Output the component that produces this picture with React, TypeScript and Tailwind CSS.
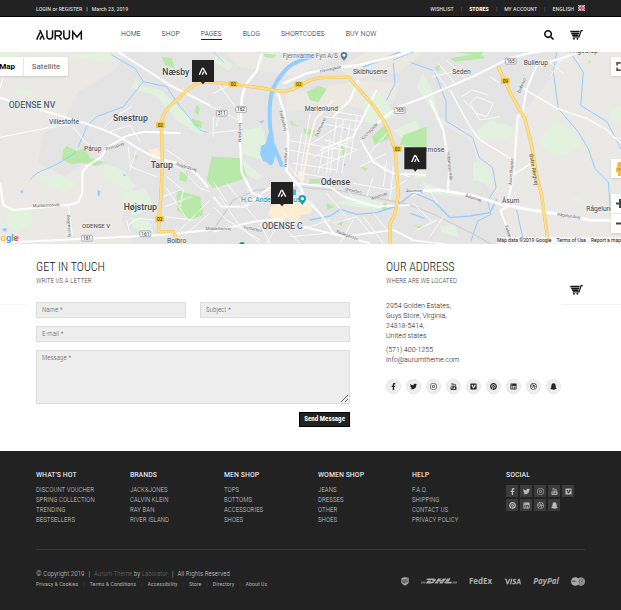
import type { ComponentType, ReactNode } from "react";
import {
  FaFacebookF,
  FaTwitter,
  FaInstagram,
  FaVimeoSquare,
  FaPinterest,
  FaLinkedin,
  FaDribbble,
  FaSnapchatGhost,
  FaSearch,
  FaDhl,
} from "react-icons/fa";
import { SiVisa } from "react-icons/si";

type IconProps = { className?: string };

const YoutubeStack = ({ className }: IconProps) => (
  <svg viewBox="0 0 16 16" className={className} fill="none" stroke="currentColor" strokeWidth="1.3">
    <path d="M3.6 0l1.4 3.4L6.4 0M5 3.2V6.4M8 2.4c-1 0-1 .6-1 1.4s0 2 1 2 1-1.2 1-2 0-1.4-1-1.4zM10.8 2v3.2c0 1 1.4.7 2-.2M12.8 2v4.2" />
    <path fill="currentColor" stroke="none" fillRule="evenodd" d="M3 7.2h10c1 0 1.8.8 1.8 1.8v5c0 1-.8 1.8-1.8 1.8H3c-1 0-1.800-.8-1.800-1.800V9c0-1 .8-1.800 1.800-1.800zM2.600 8.700v1h1v4.600h1.100V9.700h1v-1zM6 10.300v3c0 1.300 1.300 1.100 2 .5v.5h.8v-4H8v3c-.4.4-1 .5-1 0v-3zM9.600 8.700v5.600h.8c1.300.3 1.700-.3 1.700-1.200v-1.600c0-1-.8-1.400-1.600-.9V8.700z" />
  </svg>
);

const CartIcon = ({ className }: IconProps) => (
  <svg viewBox="0 0 40 32" className={className} fill="none" stroke="currentColor">
    <path d="M40 2h-5l-7 20H8" strokeWidth="4" />
    <path d="M0 5h30M3 11h25M6 17h20" strokeWidth="4.500" />
    <circle cx="12" cy="28" r="3" fill="currentColor" stroke="none" />
    <circle cx="23" cy="28" r="3" fill="currentColor" stroke="none" />
  </svg>
);

const AurumLogo = ({ className }: IconProps) => (
  <svg viewBox="0 0 142 30" className={className} fill="none" stroke="currentColor" strokeWidth="4.500">
    <path d="M2 29L12 7M10 2h3l12 27M12 29l5-11" />
    <path d="M33 1v17c0 12 17 12 17 0V1" />
    <path d="M58 29V3h11c10 0 10 14 0 14H58M68 17l9 12" />
    <path d="M84 1v17c0 12 17 12 17 0V1" />
    <path d="M111 29V5l13 16 13-16v24" />
  </svg>
);

const UpsShield = ({ className }: IconProps) => (
  <svg viewBox="0 0 26 28" className={className}>
    <path d="M1 4c7-5 17-5 24-2v14c0 6-6 8-12 12C7 24 1 22 1 16z" fill="currentColor" />
    <path d="M3 9c8 0 14-1 20-5M5 11v5c0 3 4 2 4 0v-5M12 22V11c5-2 5 6 0 6M22 10c-5-1-5 2-2 3s2 5-3 3" stroke="#222" strokeWidth="1.800" fill="none" />
  </svg>
);

const MasterCardIcon = ({ className }: IconProps) => (
  <svg viewBox="0 0 42 26" className={className} fill="currentColor">
    <circle cx="13" cy="13" r="13" />
    <path d="M29 0a13 13 0 1 1-8 23l2-2h-4l-1-2h7l1-2h-9v-2h10v-2H17l1-2h8l-1-2h-7l2-2h3l-2-3a13 13 0 0 1 8-4z" opacity=".8" />
    <path d="M4 15l2-5 2 4 3-4-1 5M13 15l2-3M22 15l3-5M31 15l3-5" stroke="#222" strokeWidth="1.500" fill="none" />
  </svg>
);

const socials: { name: string; Icon: ComponentType<IconProps> }[] = [
  { name: "Facebook", Icon: FaFacebookF },
  { name: "Twitter", Icon: FaTwitter },
  { name: "Instagram", Icon: FaInstagram },
  { name: "YouTube", Icon: YoutubeStack },
  { name: "Vimeo", Icon: FaVimeoSquare },
  { name: "Pinterest", Icon: FaPinterest },
  { name: "LinkedIn", Icon: FaLinkedin },
  { name: "Dribbble", Icon: FaDribbble },
  { name: "Snapchat", Icon: FaSnapchatGhost },
];

const navItems = ["HOME", "SHOP", "PAGES", "BLOG", "SHORTCODES", "BUY NOW"];

const footerColumns = [
  { title: "WHAT'S HOT", links: ["DISCOUNT VOUCHER", "SPRING COLLECTION", "TRENDING", "BESTSELLERS"] },
  { title: "BRANDS", links: ["JACK&JONES", "CALVIN KLEIN", "RAY BAN", "RIVER ISLAND"] },
  { title: "MEN SHOP", links: ["TOPS", "BOTTOMS", "ACCESSORIES", "SHOES"] },
  { title: "WOMEN SHOP", links: ["JEANS", "DRESSES", "OTHER", "SHOES"] },
  { title: "HELP", links: ["F.A.Q.", "SHIPPING", "CONTACT US", "PRIVACY POLICY"] },
];

const legalLinks = ["Privacy & Cookies", "Terms & Conditions", "Accessibility", "Store", "Directory", "About Us"];

function TopBar() {
  return (
    <div className="flex h-[17px] items-center justify-between border-b border-black bg-[#222] px-9 text-[6px] font-normal text-gray-200">
      <div className="flex gap-1">
        <span>
          <a href="#login">LOGIN</a> or <a href="#register">REGISTER</a>
        </span>
        <span>|</span>
        <span>March 23, 2019</span>
      </div>
      <nav className="flex items-center gap-[7px]">
        <a href="#wishlist">WISHLIST</a>
        <span className="text-[#666]">|</span>
        <a href="#stores" className="font-bold text-white">STORES</a>
        <span className="text-[#666]">|</span>
        <a href="#account">MY ACCOUNT</a>
        <span className="text-[#666]">|</span>
        <a href="#language" className="flex items-center gap-1">
          ENGLISH
          <svg viewBox="0 0 14 12" className="h-[6px] w-[7px]">
            <rect width="14" height="12" fill="#4a83c4" />
            <path d="M0 0l14 12M14 0L0 12" stroke="#dfe8f5" strokeWidth="2" />
            <path d="M7 0v12M0 6h14" stroke="#fff" strokeWidth="4" />
            <path d="M7 0v12M0 6h14" stroke="#e8432f" strokeWidth="3" />
          </svg>
        </a>
      </nav>
    </div>
  );
}

function Header() {
  return (
    <header className="flex h-[35px] items-center bg-white px-9 text-[#222]">
      <a href="#home" aria-label="Aurum" className="mr-[38px] text-[#111]">
        <AurumLogo className="h-[10px] w-[47px]" />
      </a>
      <nav className="flex flex-1 gap-[21px] text-[8px] leading-[10px]">
        {navItems.map((item) => (
          <a
            key={item}
            href={`#${item.toLowerCase()}`}
            className={item === "PAGES" ? "border-b border-[#222]" : "border-b border-transparent"}
          >
            {item}
          </a>
        ))}
      </nav>
      <div className="flex items-center gap-4 text-[#111]">
        <button aria-label="Search">
          <FaSearch className="h-[10px] w-[10px]" />
        </button>
        <button aria-label="Cart" className="mr-[2px]">
          <CartIcon className="h-[10px] w-[13px]" />
        </button>
      </div>
    </header>
  );
}

const Marker = ({ x, y }: { x: number; y: number }) => (
  <g transform={`translate(${x} ${y})`}>
    <path d="M0 0h66v66H39l-6 7-6-7H0z" fill="#222" />
    <path d="M22 44l9-19h3l10 19M31 44l4-9" fill="none" stroke="#fff" strokeWidth="4" />
  </g>
);

const RoadSign = ({ x, y, children, yellow }: { x: number; y: number; children: ReactNode; yellow?: boolean }) => (
  <g transform={`translate(${x} ${y})`}>
    <rect x={yellow ? -13 : -16} y="-8" width={yellow ? 26 : 32} height="17" rx="2" fill={yellow ? "#f6c81c" : "#fff"} stroke={yellow ? "none" : "#888"} strokeWidth="2" />
    <text y="6" textAnchor="middle" fontSize="14" fontWeight="500" fill="#444">{children}</text>
  </g>
);

function CityMap() {
  return (
    <svg viewBox="0 6 1863 576" preserveAspectRatio="xMidYMid slice" className="block h-48 w-full font-[Roboto,sans-serif]" role="img" aria-label="Map of Odense">
      <rect y="6" width="1863" height="576" fill="#ebe9e6" />
      {/* built-up area */}
      <path fill="#e4e4e5" d="M380 6L345 60 230 130l-40 90-60 30-15 90 80 40 55-40 110 20 40 60-35 90 40 80-50 56h1130l60-60-40-120-60-80-30-110-110-70 200-90 60-80 40-66H1100l-100 60-120 50-160-30-80-74z" />
      <path fill="#e4e4e5" d="M1300 6h380l-20 70-90 110-60 80-120-30-100-50-50-100z" />
      <path fill="#ece8e2" d="M860 130l220-40 120 10-20 60-80 20-60-15-180 20zM1100 6h170l-70 60-130 20-60-30z" />
      {/* pale greens */}
      <g fill="#e3f1df">
        <path d="M0 6h70l-30 20H0zM45 115l50 5 5 20-50-5zM405 85l15 20 60 15 80 70 55 50-15 15-65-40-70-80-70-20z" />
        <path d="M120 380l60-8 50 30-30 28-60-22zM20 480l70-10 10 50-50 25-30-20zM310 340l60 20 40 50-30 10-70-40zM365 430l70-15 30 60-60 20-40-20zM390 500l60 15 10 40-60-20z" />
        <path d="M730 240l55-10 20 70-20 30-60-20zM725 330l65 50-20 10-50-30zM1090 165l40-50 55 80-60 30-30-10zM1180 240l70-30 20 90-50-20z" />
        <path d="M1270 70l30 60 15 60-25-20-40-60zM1245 350l30-8 5 40-35 5zM1430 240l45-30 40 20-10 35-60 5zM1490 240l20-20 25 10 5 25-25 15-25-5zM1615 270l50-55 55 30 10 30 20 15-80 30-35-20zM1830 180l33-15v60l-30-20zM1420 335l40 10 20 60-60-15zM1320 530l45-8 10 40-50-15zM1715 435l30 5-5 15-25-5z" />
        <path d="M640 6l60 40-15 15-45-25zM1010 460l60-25 110 30-60 15zM200 15l120-5 30 15-40 10zM1265 395l60 20 90 20-10 10-120-15z" />
      </g>
      {/* parks */}
      <g fill="#b8e9a8">
        <path d="M190 300l10-12 30 15 25-10 15 30 45 15-30 10-40-10-30 5-30-15zM530 420l70 20 10 55-40 15-40-30zM540 365l25 5-5 25-22-5zM590 165l10 10-5 20-12-10zM575 205l30 10v20l-25-10zM402 313l12 4-5 12-10-6zM485 20l30 5 10 30-30-10z" />
        <path d="M635 320l90 5 15 60-50 15-50 15-20-25zM920 125l35-18 25 10-25 40-25-6zM870 210l25 20-20-5zM910 235l35 5-5 20-25-8zM1115 260l40-35 15 40-45 20zM1020 285l20 10-10 25zM930 388l30-2v14l-35 3zM980 460l25 10-25 10zM790 10l40 5-10 10-25-4zM1080 350l25 5-10 8zM1150 460l10-3v22l-14 5zM1015 515l16-2-5 14-11-2zM1210 255l70-25v65l-80-10z" />
        <path d="M1350 25l90-15 15 15-90 10zM1305 50l15-6-2 18-10-2zM1240 525l30 5-10 8zM1370 6h80l-10 12zM1765 30l10 5-8 6z" />
      </g>
      {/* centre and station blocks */}
      <path fill="#fdeed3" d="M895 365l18-4v28l-20-6zM812 470l45-15 20 10 20-25 40 30-5 20-30 5-10 20-30-12-20 20-25-5-5-25-10 10zM445 300l30-5 12 25-25-3z" />
      {/* water */}
      <g fill="none" stroke="#93ceff" strokeLinecap="round" strokeLinejoin="round">
        <path strokeWidth="12" d="M940 18c-30 10-70 20-90 50-35 40-45 70-40 160l8 60M812 250l-20 70 20 20M820 285l25 60" />
        <path strokeWidth="3" d="M335 15l70 40 25 40-60 75-80 30-30 30-25 60M430 95l70 15 40 60 60 70 30 10" />
        <path strokeWidth="3" d="M92 388c20-30 60-30 95-55l40-25M1180 30l60-24M1233 38l70 25 35 90v60l80 50 20 60 40 30 10 60-25 40 10 40-40 20-20 60M1670 6l-10 60 15 110 60 70 30 50 20 60 40 40 5 70" />
        <path strokeWidth="4" d="M930 510l60-12 30-20 50 15 60-5 60-20 50-40 60 25 50 50 60-5 60-10 20-40M1233 490l40 15" />
        <path strokeWidth="3" d="M1710 6l40 60-8 100 80 50 40 80M1550 480l20 90M640 6l30 30M1160 150l25-50-5-60" />
        <path strokeWidth="5" d="M1090 50l40-15 70-29" />
      </g>
      <path fill="#93ceff" d="M783 288l25-12 22 20-10 45-30-8-10-20zM60 425l10-6-2 12zM293 420l8 4-3 18-5-8zM370 372h6v6h-6zM8 535h14l-4 10-10-2zM1033 235l5-2-3 10zM1030 340l8 2-5 8zM775 215l18-5-6 10z" />
      {/* rail */}
      <path fill="none" stroke="#cfcfcf" strokeWidth="4" d="M640 540l60-90 70-30 130-8 120 10 200 40 80 30 120 60 60 34" />
      {/* residential streets */}
      <g fill="none" stroke="#fbfbfb" strokeWidth="3">
        <path d="M310 235l35-35 50-30M330 245l60-20 30 50M385 290l5 60 80 30M410 300l-20 60M440 345l30-35M500 300l60 40M490 335l50 20 60 60 30 10M500 415l60 90M490 440l50-20M495 470l80-30M490 500l90 10M540 540l90-90M560 550l70-60M500 380l50 40-10 50M385 525l30-20 50 5M390 550l-10-40" />
        <path d="M650 95l60 80 10 60M640 130l60-30M615 160l100 50M620 250l100-10M640 200v60M660 170l-10 60M850 330l60 70M860 270l110 20 60 10M870 300l150 30M880 340l130 20M900 370l130 20M905 250l-20 130M930 190l-30 190M970 290l-15 80M990 260l-10 110M1010 200l-20 170M1030 210l-20 160M1050 220l-25 150M1070 200l-20 130M960 220l110 20M970 200l120 15M975 180l120 20M920 290l110-70M940 320l120-50M960 350l110-50M975 270l100 30" />
        <path d="M1080 350l80-40M1090 290l60 70 80 20M1100 320l70-80M1060 400l110 20 50-30M1030 400l40 60 70 10M1120 380l-20 60M1160 330l-10 80M1180 350l-10 100M930 450l50 70M980 430l60 70M1000 520l70-20 50 60M1060 510l-40 70M1090 500l60 80M1120 490l50 60M900 540l90-30M870 560l110-10M820 500l80 80M850 490l60 50M780 520l30 60M800 580l50-80M640 470l40 40 100 60M660 440l60 90 60 50M680 400l90 110M640 395l40 60M740 470l60-50 100 10" />
        <path d="M1300 60l40 50M1315 40l50 60M1295 80l90-20M1340 30l60 60M1390 150l40 40 30 10 20-40-50-20-20 20 30 50 60-10M1385 140l30-20 50 15M1470 80l30 20M1233 440l50-30 30 50M1240 460l60 60M1250 540l60-30M1290 560l40-60M1640 30l50 40M1690 20l-40 60" />
      </g>
      {/* main streets */}
      <g fill="none" stroke="#fff" strokeLinejoin="round">
        <path strokeWidth="6" d="M0 143l200 60c70 20 130 40 180 70 50 35 90 55 150 65 40 10 70 40 95 75M355 6l95 60 60 40 120 60M0 578l180-8 200-10 100-5 150-15M0 400l10 65 30 15 165-15 30-8 12-30v-60l15-20 40-25 20-30 60-35 50-12 110 5" />
        <path strokeWidth="3" d="M10 80l-10 35M0 262l150-30 60-8M220 230l30 40 25 20M205 465l12 90" />
        <path strokeWidth="7" d="M785 12l-15 50-35 45-10 40-5 120 5 100 30 60 30 15M830 118l20 60 15 80-5 105 45 55 10 50M850 100l70-30 70-15 90-10 150-39" />
        <path strokeWidth="6" d="M1083 270l65-65 50-35 80-30 140-60 60-30 50-25 60-15 60-10M1000 200l50-50 25-60" />
        <path stroke="#fdf3e2" strokeWidth="6" d="M905 400l25-130 15-60 55-60" />
        <path strokeWidth="5" d="M1083 270l35 65 60 35 100 5M960 300l100-40 40-80 30-60M615 90l60 10 60 10M640 440l25 30h70l70-55 80-10M640 545l120-30 90-10M890 400l100 10 40 30 100 30 100-5M900 430l60 60 40 60 110 30M910 530l120 30 150-20 60 30" />
        <path strokeWidth="8" d="M1233 425l80-5 100 15 90 28 80 15 100 15 90 18h70l20-8" />
        <path strokeWidth="6" d="M1290 150l40 90 18 110-5 80M1740 6l-60 20-70 20-30 70-12 70-15 15-12 170-20 100-20 10 40 100" />
        <path strokeWidth="4" d="M1350 120l60 110 30 40 100 60M1570 115l100 60 90 30 60 35 43 40M1545 370l50-30M1233 570l100 12" />
      </g>
      {/* ring roads */}
      <g fill="none" strokeLinecap="round" strokeLinejoin="round">
        <path stroke="#eec366" strokeWidth="10" d="M606 95c-30 10-40 20-70 50-35 30-50 45-52 80l3 100-4 110-5 65-3 45h45l15 30M606 95l80 6 90 12 70 12c60-5 60-40 130-43h70c40 50 90 90 120 160l20 60 9 130-10 60-15 30v60M1495 52l40 85 40 70 20 80 15 90 15 60 20 145" />
        <path stroke="#ffdf85" strokeWidth="7" d="M606 95c-30 10-40 20-70 50-35 30-50 45-52 80l3 100-4 110-5 65-3 45h45l15 30M606 95l80 6 90 12 70 12c60-5 60-40 130-43h70c40 50 90 90 120 160l20 60 9 130-10 60-15 30v60M1495 52l40 85 40 70 20 80 15 90 15 60 20 145" />
      </g>
      <RoadSign x={481} y={225} yellow>02</RoadSign>
      <RoadSign x={479} y={507} yellow>02</RoadSign>
      <RoadSign x={700} y={101} yellow>02</RoadSign>
      <RoadSign x={896} y={103} yellow>02</RoadSign>
      <RoadSign x={1192} y={297} yellow>02</RoadSign>
      <RoadSign x={1516} y={92} yellow>09</RoadSign>
      <RoadSign x={261} y={564}>161</RoadSign>
      <RoadSign x={436} y={551}>161</RoadSign>
      <RoadSign x={665} y={189}>311</RoadSign>
      <RoadSign x={723} y={178}>162</RoadSign>
      <RoadSign x={1199} y={181}>165</RoadSign>
      <RoadSign x={1532} y={33}>165</RoadSign>
      {/* place names */}
      <g fill="#3f464d" stroke="#f4f4f4" strokeWidth="3" paintOrder="stroke">
        <g fontSize="26" fontWeight="500">
          <text x="487" y="75">Næsby</text>
          <text x="339" y="214">Snestrup</text>
          <text x="452" y="355">Tarup</text>
          <text x="371" y="479">Højstrup</text>
          <text x="962" y="404">Odense</text>
        </g>
        <g fill="#54606d" fontWeight="500">
          <text x="26" y="175" fontSize="26">ODENSE NV</text>
          <text x="246" y="535" fontSize="18">ODENSE V</text>
          <text x="786" y="536" fontSize="26">ODENSE C</text>
        </g>
        <g fontSize="20">
          <text x="147" y="221">Villestofte</text>
          <text x="252" y="303">Pårup</text>
          <text x="501" y="578">Bolbro</text>
          <text x="1059" y="71">Skibhusene</text>
          <text x="914" y="184">Marienlund</text>
          <text x="1357" y="71">Seden</text>
          <text x="1571" y="45">Bullerup</text>
          <text x="1719" y="9">Agedrup</text>
          <text x="1276" y="307">rmose</text>
          <text x="1506" y="458">Åsum</text>
          <text x="1759" y="483">Rågelund</text>
        </g>
        <text x="848" y="25" fontSize="19" fill="#5c7286">Fjernvarme Fyn A/S</text>
        <text x="723" y="456" fontSize="20" fill="#1b8a9e">H.C. Andersens Hus</text>
        <text x="630" y="593" fontSize="18" fill="#2e7d32">Danmarks</text>
        <g fontSize="13" fill="#666" strokeWidth="2">
          <text x="98" y="472" transform="rotate(-3 98 472)">Munkemosvej</text>
          <text x="318" y="302" transform="rotate(-18 318 302)">Paarupvej</text>
          <text x="528" y="345" transform="rotate(18 528 345)">Rugårdsvej</text>
          <text x="201" y="495" transform="rotate(86 201 495)">Bogensevej</text>
          <text x="724" y="275" transform="rotate(-90 724 275)">Næsbyvej</text>
          <text x="837" y="182" transform="rotate(75 837 182)">Toldbodvej</text>
          <text x="860" y="350" transform="rotate(-88 860 350)">Nordhavn</text>
          <text x="952" y="262" transform="rotate(-65 952 262)">Skibhusvej</text>
          <text x="960" y="68" transform="rotate(-12 960 68)">Havnegade</text>
          <text x="1089" y="270" transform="rotate(-46 1089 270)">Kochsgade</text>
          <text x="1035" y="421" transform="rotate(12 1035 421)">Østerbro</text>
          <text x="1115" y="451" transform="rotate(-20 1115 451)">Åsumvej</text>
          <text x="730" y="535" transform="rotate(12 730 535)">Vesterbro</text>
          <text x="617" y="541">Middelfartvej</text>
          <text x="1008" y="548" transform="rotate(20 1008 548)">Rødegårdsv.</text>
          <text x="1218" y="427">Åsumvej</text>
          <text x="1340" y="305" transform="rotate(84 1340 305)">Vollsmose Allé</text>
          <text x="1395" y="440" transform="rotate(18 1395 440)">Åsumvej</text>
          <text x="1535" y="405" transform="rotate(-86 1535 405)">Åsum Bygade</text>
          <text x="1560" y="130" transform="rotate(-68 1560 130)">Bullerup</text>
          <text x="1671" y="497" transform="rotate(8 1671 497)">Rågelundvej</text>
          <text x="1514" y="527" transform="rotate(72 1514 527)">Kirkevej</text>
        </g>
        <text x="1588" y="312" transform="rotate(80 1588 312)" fontSize="16" fontWeight="500" fill="#7d5a1e" strokeWidth="1">Østre Ringvej</text>
      </g>
      {/* place pins */}
      <path d="M1032 33c-5-8-10-10-10-17a10 10 0 0 1 20 0c0 7-5 9-10 17z" fill="#5b7f96" />
      <circle cx="1032" cy="16" r="4" fill="#fff" />
      <path d="M907 465c-5-8-11-12-11-19a11 11 0 0 1 22 0c0 7-6 11-11 19z" fill="#12a0b5" />
      <circle cx="907" cy="446" r="5" fill="#fff" />
      <rect x="870" y="418" width="18" height="18" rx="3" fill="#37b9e8" />
      <path d="M718 582a8 6 0 0 1 16 0z" fill="#23a03b" />
      <Marker x={576} y={30} />
      <Marker x={813} y={396} />
      <Marker x={1213} y={292} />
      <text x="-14" y="574" fontSize="28" fontWeight="500" stroke="#fff" strokeWidth="2" paintOrder="stroke">
        <tspan fill="#ea4335">o</tspan>
        <tspan fill="#fbbc05">o</tspan>
        <tspan fill="#4285f4">g</tspan>
        <tspan fill="#34a853">l</tspan>
        <tspan fill="#ea4335">e</tspan>
      </text>
    </svg>
  );
}

function MapSection() {
  return (
    <section className="relative overflow-hidden font-[Roboto,sans-serif] font-normal text-[#333]">
      <CityMap />
      <div className="absolute top-[5px] left-0 flex h-[19px] rounded-r-xs bg-white text-[8px] shadow-sm">
        <button className="flex w-6 items-center justify-end border-r border-gray-200 pr-2 font-bold text-black">Map</button>
        <button className="w-11 text-[#555]">Satellite</button>
      </div>
      <button aria-label="Full screen" className="absolute top-[5px] right-0 flex h-[19px] w-[10px] items-center justify-end overflow-hidden bg-white shadow-sm">
        <svg viewBox="0 0 5 10" className="h-[9px] w-[5px]" fill="none" stroke="#555" strokeWidth="2">
          <path d="M5 1H1v3M1 6v3h4" />
        </svg>
      </button>
      <button aria-label="Street view" className="absolute top-[107px] right-0 flex h-[19px] w-[10px] items-center justify-end overflow-hidden bg-white shadow-sm">
        <svg viewBox="0 0 5 15" className="h-[14px] w-[5px]">
          <circle cx="4" cy="3" r="3" fill="#f5b82e" />
          <path d="M0 6h5v9H2v-4H0z" fill="#f5b82e" />
          <path d="M2 6l3 3" stroke="#d9541b" />
        </svg>
      </button>
      <div className="absolute top-[142px] right-0 flex h-[39px] w-[10px] flex-col divide-y divide-gray-200 overflow-hidden bg-white text-[#444] shadow-sm">
        {["Zoom in", "Zoom out"].map((label) => (
          <button key={label} aria-label={label} className="flex flex-1 items-center justify-end">
            <svg viewBox="0 0 5 9" className="h-[9px] w-[5px]" stroke="currentColor" strokeWidth="2">
              <path d={label === "Zoom in" ? "M0 4.500h5M4 0v9" : "M0 4.500h5"} />
            </svg>
          </button>
        ))}
      </div>
      <div className="absolute right-0 bottom-0 flex gap-[5px] bg-white/60 text-[5px] leading-[7px] whitespace-nowrap text-[#222]">
        <span>Map data ©2019 Google</span>
        <a href="#terms">Terms of Use</a>
        <a href="#report">Report a map</a>
      </div>
    </section>
  );
}

const fieldClass =
  "block w-full border border-[#ddd] bg-[#eee] px-[5px] text-[7px] text-[#555] placeholder:text-[#666] focus:outline-none";

function ContactForm() {
  return (
    <div>
      <h2 className="text-[12px] leading-[14px] text-[#111]">GET IN TOUCH</h2>
      <p className="mt-[2px] text-[7px] leading-[10px] text-[#444]">WRITE US A LETTER</p>
      <form className="mt-4 space-y-2" onSubmit={(e) => e.preventDefault()}>
        <div className="grid grid-cols-2 gap-[14px]">
          <input aria-label="Name" placeholder="Name *" className={`${fieldClass} h-4`} />
          <input aria-label="Subject" placeholder="Subject *" className={`${fieldClass} h-4`} />
        </div>
        <input aria-label="E-mail" type="email" placeholder="E-mail *" className={`${fieldClass} h-4`} />
        <textarea aria-label="Message" placeholder="Message *" className={`${fieldClass} h-[54px] py-[3px] leading-[8px]`} />
        <div className="flex justify-end">
          <button className="h-[15px] border border-black bg-[#222] px-1 text-[7px] font-bold text-white">Send Message</button>
        </div>
      </form>
    </div>
  );
}

function Address() {
  return (
    <div>
      <h2 className="text-[12px] leading-[14px] text-[#111]">OUR ADDRESS</h2>
      <p className="mt-[2px] text-[7px] leading-[10px] text-[#444]">WHERE ARE WE LOCATED</p>
      <address className="mt-[15px] font-[Roboto,sans-serif] text-[7px] leading-[10px] text-[#111] not-italic">
        <p>
          2954 Golden Estates,
          <br />
          Guys Store, Virginia,
          <br />
          24318-5414,
          <br />
          United states
        </p>
        <p className="mt-1">
          (571) 400-1255
          <br />
          <a href="mailto:info@aurumtheme.com">info@aurumtheme.com</a>
        </p>
      </address>
      <div className="mt-[14px] flex gap-[5px]">
        {socials.map(({ name, Icon }) => (
          <a key={name} href={`#${name}`} aria-label={name} className="flex size-[15px] items-center justify-center rounded-full border border-[#e4e4e4] bg-[#eee] text-[#222]">
            <Icon className="size-[7px]" />
          </a>
        ))}
      </div>
    </div>
  );
}

function Footer() {
  return (
    <footer className="border-b border-[#555] bg-[#222] px-9 pt-[18px] pb-[21px] text-[#ccc]">
      <div className="grid grid-cols-6 gap-[15px] border-b border-[#363636] pb-6">
        {footerColumns.map(({ title, links }) => (
          <div key={title}>
            <h3 className="text-[8px] leading-[12px] font-normal whitespace-nowrap text-white">{title}</h3>
            <ul className="mt-1 text-[7px] leading-[10px] whitespace-nowrap">
              {links.map((link) => (
                <li key={link}>
                  <a href="#shop">{link}</a>
                </li>
              ))}
            </ul>
          </div>
        ))}
        <div>
          <h3 className="text-[8px] leading-[12px] font-normal text-white">SOCIAL</h3>
          <div className="mt-1 flex flex-wrap gap-[2px]">
            {socials.map(({ name, Icon }) => (
              <a key={name} href={`#${name}`} aria-label={name} className="flex size-3 items-center justify-center bg-[#3b3b3b] text-[#bbb]">
                <Icon className="size-[7px]" />
              </a>
            ))}
          </div>
        </div>
      </div>
      <div className="flex items-start justify-between pt-[19px]">
        <div>
          <p className="flex gap-1 text-[7px] leading-[10px]">
            <span>© Copyright 2019</span>
            <span>|</span>
            <span>
              <a href="#theme" className="text-[#666]">Aurum Theme</a> by <a href="#laborator" className="text-[#666]">Laborator</a>
            </span>
            <span>|</span>
            <span>All Rights Reserved</span>
          </p>
          <ul className="flex text-[6px] leading-[10px] font-normal text-[#aaa]">
            {legalLinks.map((link, i) => (
              <li key={link}>
                {i > 0 && <span className="px-[5px] text-[#444]">|</span>}
                <a href="#legal">{link}</a>
              </li>
            ))}
          </ul>
        </div>
        <div className="flex h-6 items-center gap-3 font-['Open_Sans',sans-serif] text-[8px] font-bold text-[#aaa]">
          <UpsShield className="h-[9px] w-2" />
          <FaDhl preserveAspectRatio="xMidYMid slice" className="h-2 w-9" />
          <span>FedEx</span>
          <SiVisa className="size-[17px]" />
          <span className="italic">PayPal</span>
          <MasterCardIcon className="h-[9px] w-[14px]" />
        </div>
      </div>
    </footer>
  );
}

export default function App() {
  return (
    <div className="min-h-screen bg-white font-['Roboto_Condensed','Liberation_Sans_Narrow',sans-serif] leading-normal font-light">
      <TopBar />
      <Header />
      <MapSection />
      <main className="relative grid grid-cols-[314fr_199fr] gap-9 px-9 pt-4 pb-6">
        <ContactForm />
        <Address />
        {/* collapsed sticky header edge */}
        <div className="absolute top-[60px] left-0 w-[26px] border-b border-[#f6f6f6]" />
        <div className="absolute top-10 right-0 flex h-[21px] w-[60px] border-b border-[#f4f4f4] pl-[9px]">
          <button aria-label="Open cart" className="h-3 text-[#111]">
            <CartIcon className="h-[10px] w-[13px]" />
          </button>
        </div>
      </main>
      <Footer />
    </div>
  );
}
